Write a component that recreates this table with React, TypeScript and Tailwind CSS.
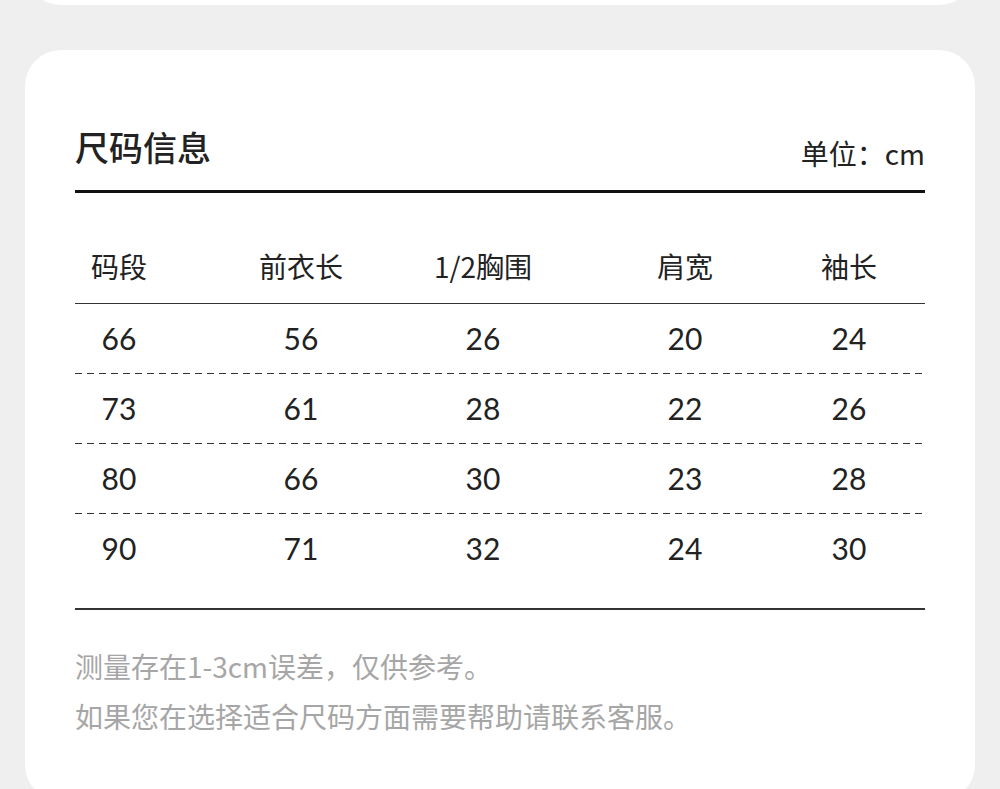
const cjk = "font-['Noto_Sans_CJK_SC','Noto_Sans',sans-serif]";
const num = "font-['Lato','Noto_Sans_CJK_SC',sans-serif]";

// each cell is 88px wide; margins put the centres where the columns sit
const cols = ["ml-0", "ml-[94px]", "ml-[94px]", "ml-[114px]", "ml-[76px]"];

const headers = ["码段", "前衣长", "1/2胸围", "肩宽", "袖长"];

const rows = [
  ["66", "56", "26", "20", "24"],
  ["73", "61", "28", "22", "26"],
  ["80", "66", "30", "23", "28"],
  ["90", "71", "32", "24", "30"],
];

function Dashed() {
  return (
    <div className="h-px w-full bg-[linear-gradient(to_right,#333_7px,transparent_7px)] bg-[length:12px_1px] bg-repeat-x" />
  );
}

function Row({ cells, className }: { cells: string[]; className: string }) {
  return (
    <div className={`flex ${className}`}>
      {cells.map((c, i) => (
        <div key={i} className={`w-[88px] shrink-0 flex justify-center whitespace-nowrap ${cols[i]}`}>
          {c}
        </div>
      ))}
    </div>
  );
}

export default function App() {
  return (
    <div className="min-h-screen bg-[#efefef] overflow-hidden">
      {/* bottom of the card above */}
      <div className="mx-[25px] -mt-[36px] h-[41px] rounded-b-[36px] bg-white" />

      <div className="mx-[25px] mt-[45px] rounded-[36px] bg-white px-[50px] pt-[77px] pb-[60px]">
        <div className="flex items-end justify-between">
          <h1 className={`${cjk} text-[34px] leading-[40px] font-medium text-[#222] pb-[4px]`}>尺码信息</h1>
          <span className={`${cjk} text-[28px] leading-[36px] text-[#222]`}>单位：cm</span>
        </div>
        <div className="mt-[19px] h-[3px] bg-[#111]" />

        <Row cells={headers} className={`${cjk} text-[28px] leading-[36px] text-[#222] pt-[55px] pb-[19px]`} />
        <div className="h-px bg-[#333]" />

        {rows.map((r, i) => (
          <div key={i}>
            <Row cells={r} className={`${num} h-[69px] items-center text-[30px] text-[#222]`} />
            {i < rows.length - 1 && <Dashed />}
          </div>
        ))}
        <div className="mt-[25px] h-[2px] bg-[#333]" />

        <div className={`${cjk} mt-[31px] text-[28px] leading-[50px] text-[#a6a6a6]`}>
          <p>测量存在1-3cm误差，仅供参考。</p>
          <p>如果您在选择适合尺码方面需要帮助请联系客服。</p>
        </div>
      </div>
    </div>
  );
}
